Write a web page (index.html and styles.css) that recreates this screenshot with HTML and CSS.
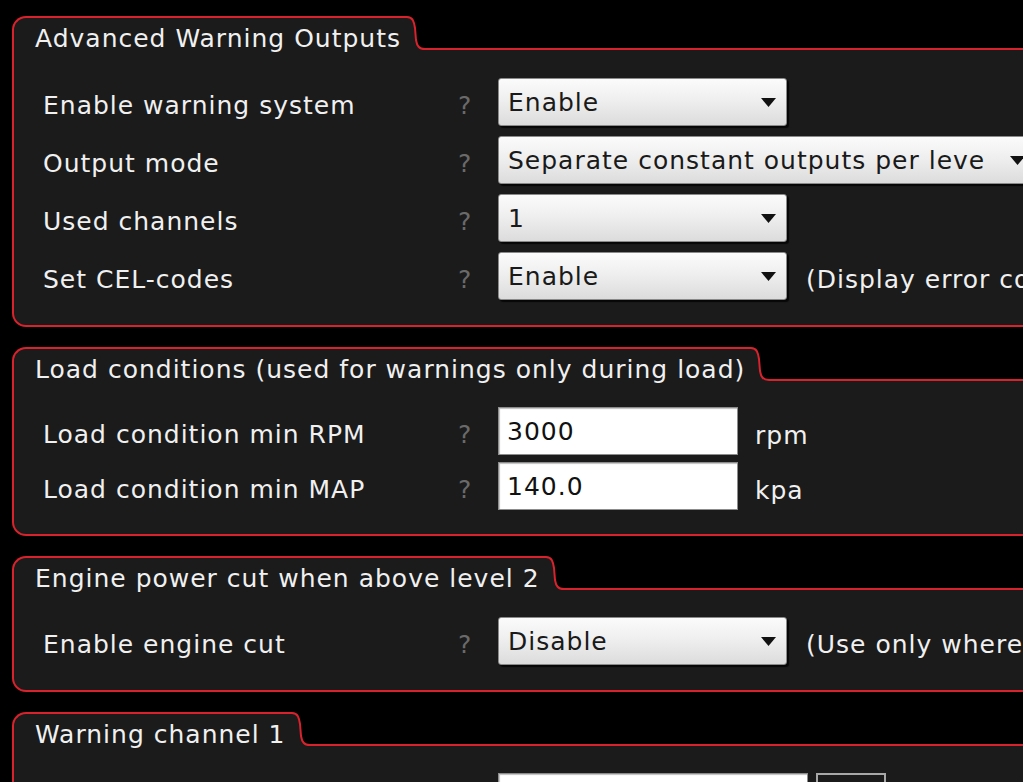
FILE: index.html
```html
<!DOCTYPE html>
<html lang="en">
<head>
<meta charset="utf-8">
<title>Advanced Warning Outputs</title>
<link rel="stylesheet" href="styles.css">
</head>
<body>
<div class="page">

  <section class="panel">
    <div class="panel-head">
      <div class="tab">Advanced Warning Outputs</div>
      <svg class="tab-curve" width="22" height="34" viewBox="0 0 22 34"><path class="curve-fill" d="M0 1 H3 C9 1 10 6 11 12 L12 24 C13 30 15 33 21 33 H22 V34 H0 Z"/><path class="curve-line" d="M0 1 H3 C9 1 10 6 11 12 L12 24 C13 30 15 33 21 33 H22"/></svg>
      <div class="head-line"></div>
    </div>
    <div class="panel-body p1">
      <div class="row">
        <span class="label">Enable warning system</span>
        <span class="help">?</span>
        <div class="select"><span class="select-text">Enable</span><svg class="arrow" width="15" height="9" viewBox="0 0 15 9"><path d="M0 0 H15 L7.5 9 Z"/></svg></div>
      </div>
      <div class="row">
        <span class="label">Output mode</span>
        <span class="help">?</span>
        <div class="select wide"><span class="select-text">Separate constant outputs per leve</span><svg class="arrow" width="15" height="9" viewBox="0 0 15 9"><path d="M0 0 H15 L7.5 9 Z"/></svg></div>
      </div>
      <div class="row">
        <span class="label">Used channels</span>
        <span class="help">?</span>
        <div class="select"><span class="select-text">1</span><svg class="arrow" width="15" height="9" viewBox="0 0 15 9"><path d="M0 0 H15 L7.5 9 Z"/></svg></div>
      </div>
      <div class="row">
        <span class="label">Set CEL-codes</span>
        <span class="help">?</span>
        <div class="select"><span class="select-text">Enable</span><svg class="arrow" width="15" height="9" viewBox="0 0 15 9"><path d="M0 0 H15 L7.5 9 Z"/></svg></div>
        <span class="note">(Display error codes)</span>
      </div>
    </div>
  </section>

  <section class="panel">
    <div class="panel-head">
      <div class="tab">Load conditions (used for warnings only during load)</div>
      <svg class="tab-curve" width="22" height="34" viewBox="0 0 22 34"><path class="curve-fill" d="M0 1 H3 C9 1 10 6 11 12 L12 24 C13 30 15 33 21 33 H22 V34 H0 Z"/><path class="curve-line" d="M0 1 H3 C9 1 10 6 11 12 L12 24 C13 30 15 33 21 33 H22"/></svg>
      <div class="head-line"></div>
    </div>
    <div class="panel-body p2">
      <div class="row">
        <span class="label">Load condition min RPM</span>
        <span class="help">?</span>
        <div class="input">3000</div>
        <span class="unit">rpm</span>
      </div>
      <div class="row">
        <span class="label">Load condition min MAP</span>
        <span class="help">?</span>
        <div class="input">140.0</div>
        <span class="unit">kpa</span>
      </div>
    </div>
  </section>

  <section class="panel">
    <div class="panel-head">
      <div class="tab">Engine power cut when above level 2</div>
      <svg class="tab-curve" width="22" height="34" viewBox="0 0 22 34"><path class="curve-fill" d="M0 1 H3 C9 1 10 6 11 12 L12 24 C13 30 15 33 21 33 H22 V34 H0 Z"/><path class="curve-line" d="M0 1 H3 C9 1 10 6 11 12 L12 24 C13 30 15 33 21 33 H22"/></svg>
      <div class="head-line"></div>
    </div>
    <div class="panel-body p3">
      <div class="row">
        <span class="label">Enable engine cut</span>
        <span class="help">?</span>
        <div class="select"><span class="select-text">Disable</span><svg class="arrow" width="15" height="9" viewBox="0 0 15 9"><path d="M0 0 H15 L7.5 9 Z"/></svg></div>
        <span class="note">(Use only where allowed)</span>
      </div>
    </div>
  </section>

  <section class="panel">
    <div class="panel-head">
      <div class="tab">Warning channel 1</div>
      <svg class="tab-curve" width="22" height="34" viewBox="0 0 22 34"><path class="curve-fill" d="M0 1 H3 C9 1 10 6 11 12 L12 24 C13 30 15 33 21 33 H22 V34 H0 Z"/><path class="curve-line" d="M0 1 H3 C9 1 10 6 11 12 L12 24 C13 30 15 33 21 33 H22"/></svg>
      <div class="head-line"></div>
    </div>
    <div class="panel-body p4">
      <div class="row">
        <span class="label"></span>
        <span class="help"></span>
        <div class="input long"></div>
        <div class="btn"></div>
      </div>
    </div>
  </section>

</div>
</body>
</html>
```

FILE: styles.css
```css
html, body {
  margin: 0;
  height: 100%;
  overflow: hidden;
  background: #000;
}

body {
  font-family: "DejaVu Sans", Verdana, sans-serif;
  font-size: 25px;
  letter-spacing: 1px;
  color: #f0f0f0;
}

.page {
  display: flex;
  flex-direction: column;
  gap: 20px;
  padding: 16px 0 0 12px;
  width: 1120px;
}

.panel {
  width: 1100px;
}

.panel-head {
  display: flex;
  height: 34px;
}

.tab {
  box-sizing: border-box;
  height: 34px;
  background: #1b1b1b;
  border-top: 2px solid #d8222c;
  border-left: 2px solid #d8222c;
  border-top-left-radius: 14px;
  padding: 6px 3px 0 21px;
  line-height: 30px;
  white-space: nowrap;
}

.tab-curve {
  display: block;
  flex: none;
}

.curve-fill {
  fill: #1b1b1b;
}

.curve-line {
  fill: none;
  stroke: #d8222c;
  stroke-width: 2;
}

.head-line {
  flex: 1;
  box-sizing: border-box;
  height: 34px;
  border-bottom: 2px solid #d8222c;
}

.panel-body {
  background: #1b1b1b;
  border: 2px solid #d8222c;
  border-top: none;
  border-radius: 0 0 14px 14px;
  display: flex;
  flex-direction: column;
  padding-left: 29px;
}

.p1 { gap: 10px; padding-top: 28px; padding-bottom: 25px; }
.p2 { gap: 7px; padding-top: 26px; padding-bottom: 24px; }
.p3 { padding-top: 27px; padding-bottom: 25px; }
.p4 { padding-top: 27px; padding-bottom: 40px; }

.row {
  display: flex;
  align-items: center;
  height: 48px;
}

.label {
  flex: none;
  width: 415px;
  padding-top: 7px;
  white-space: nowrap;
}

.help {
  flex: none;
  width: 40px;
  padding-top: 7px;
  color: #6a6a6a;
}

.select {
  flex: none;
  box-sizing: border-box;
  width: 289px;
  height: 48px;
  display: flex;
  align-items: center;
  padding: 0 10px 0 9px;
  border: 1px solid #8a8a8a;
  border-radius: 3px;
  background: linear-gradient(#fbfbfb, #efefef 45%, #dcdcdc);
  box-shadow: 2px 2px 1px rgba(0, 0, 0, 0.75);
  color: #1a1a1a;
}

.select.wide {
  width: 538px;
}

.select-text {
  flex: 1;
  overflow: hidden;
  white-space: nowrap;
  padding-top: 1px;
}

.arrow {
  flex: none;
  display: block;
  fill: #111;
}

.note {
  margin-left: 19px;
  padding-top: 7px;
  white-space: nowrap;
}

.input {
  flex: none;
  box-sizing: border-box;
  width: 240px;
  height: 48px;
  display: flex;
  align-items: center;
  padding-left: 8px;
  background: #fff;
  border: 1px solid #8c8c8c;
  box-shadow: inset 1px 1px 1px rgba(0, 0, 0, 0.25);
  color: #111;
}

.input.long {
  width: 310px;
}

.unit {
  margin-left: 17px;
  padding-top: 9px;
}

.btn {
  flex: none;
  box-sizing: border-box;
  width: 70px;
  height: 48px;
  margin-left: 8px;
  border: 2px solid #a8a8a8;
  background: #1b1b1b;
}
```
